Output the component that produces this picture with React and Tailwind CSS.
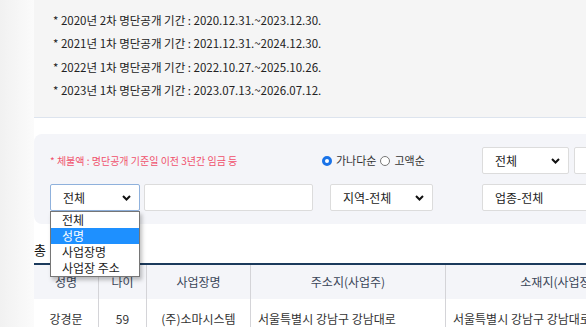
import React from "react";

const font = { fontFamily: '"Noto Sans CJK KR", "Noto Sans", sans-serif' };

const Chevron = () => (
  <svg width="9" height="6" viewBox="0 0 9 6" className="shrink-0">
    <path d="M1 1l3.5 3.5L8 1" fill="none" stroke="#111" strokeWidth="2" />
  </svg>
);

const FakeSelect = ({ label, className = "", focused = false }) => (
  <div
    className={`h-[27px] bg-white rounded-[2px] border flex items-center justify-between pl-[12px] pr-[8px] text-[12px] text-[#222] ${
      focused ? "border-[#8fb1dc]" : "border-[#dcdcdc]"
    } ${className}`}
  >
    <span>{label}</span>
    <Chevron />
  </div>
);

const Radio = ({ checked }) =>
  checked ? (
    <span className="w-[10px] h-[10px] rounded-full border-[3px] border-[#1a73e8] bg-white shrink-0" />
  ) : (
    <span className="w-[10px] h-[10px] rounded-full border border-[#777] bg-white shrink-0" />
  );

const notices = [
  "* 2020년 2차 명단공개 기간 : 2020.12.31.~2023.12.30.",
  "* 2021년 1차 명단공개 기간 : 2021.12.31.~2024.12.30.",
  "* 2022년 1차 명단공개 기간 : 2022.10.27.~2025.10.26.",
  "* 2023년 1차 명단공개 기간 : 2023.07.13.~2026.07.12.",
];

const App = () => {
  return (
    <div className="w-[586px] h-[327px] overflow-hidden bg-white flex" style={font}>
      <div className="w-[34px] shrink-0 bg-gradient-to-r from-[#f1f1f1] to-[#fbfbfb]" />

      <div className="flex-1 min-w-0">
        {/* 명단공개 기간 */}
        <div className="h-[118px] bg-[#f5f5f5] border-b border-[#dde4ee] pl-[19px] pt-[9px] text-[11.5px] text-[#222] leading-[23.3px]">
          {notices.map((n) => (
            <div key={n} className="whitespace-nowrap">
              {n}
            </div>
          ))}
        </div>

        {/* 검색 */}
        <div className="mt-[16px] h-[90px] w-[600px] bg-[#f4f5f9] rounded-l-lg pl-[16px] pt-[13px]">
          <div className="flex items-center h-[27px]">
            <div className="w-[272px] text-[10px] text-[#f0516c] whitespace-nowrap">
              * 체불액 : 명단공개 기준일 이전 3년간 임금 등
            </div>
            <div className="w-[160px] flex items-center text-[11px] text-[#333] whitespace-nowrap">
              <Radio checked />
              <span className="ml-[4px]">가나다순</span>
              <span className="ml-[4px]" />
              <Radio />
              <span className="ml-[4px]">고액순</span>
            </div>
            <FakeSelect label="전체" className="w-[87px] shrink-0" />
            <div className="ml-[5px] w-[60px] h-[27px] bg-white border border-[#dcdcdc] rounded-[2px] shrink-0" />
          </div>

          <div className="flex items-center h-[27px] mt-[10px]">
            <div className="relative w-[90px] shrink-0">
              <FakeSelect label="전체" focused />
              <div className="absolute left-0 top-full w-[90px] bg-white border border-[#767676] shadow-[2px_3px_4px_rgba(0,0,0,0.25)] z-10 text-[12px] leading-[16px]">
                <div className="pl-[11px] text-[#222]">전체</div>
                <div className="pl-[11px] bg-[#1e90ff] text-white">성명</div>
                <div className="pl-[11px] text-[#222]">사업장명</div>
                <div className="pl-[11px] text-[#222]">사업장 주소</div>
              </div>
            </div>
            <div className="ml-[4px] w-[169px] h-[27px] bg-white border border-[#dcdcdc] rounded-[2px] shrink-0" />
            <FakeSelect label="지역-전체" className="ml-[17px] w-[103px] shrink-0" />
            <div className="ml-[49px] w-[150px] h-[27px] bg-white border border-[#dcdcdc] rounded-[2px] shrink-0 flex items-center pl-[12px] text-[12px] text-[#222]">
              업종-전체
            </div>
          </div>
        </div>

        {/* 총 */}
        <div className="h-[39px] pt-[18px] text-[13px] leading-[16px] text-[#111]">총</div>

        {/* 목록 */}
        <div className="w-[700px] border-t-2 border-[#1b3a5c]">
          <div className="flex h-[34px] bg-[#f4f5f9] text-[12px] text-[#3a4658]">
            <div className="w-[64px] flex items-center justify-center">성명</div>
            <div className="w-[48px] flex items-center justify-center border-l border-[#d4d4d8]">나이</div>
            <div className="w-[104px] flex items-center justify-center border-l border-[#d4d4d8]">사업장명</div>
            <div className="w-[195px] flex items-center justify-center border-l border-[#d4d4d8]">주소지(사업주)</div>
            <div className="w-[280px] flex items-center justify-center border-l border-[#d4d4d8]">
              <span className="-ml-[56px]">소재지(사업장)</span>
            </div>
          </div>
          <div className="flex h-[40px] text-[12px] text-[#333]">
            <div className="w-[64px] flex items-center justify-center">강경문</div>
            <div className="w-[48px] flex items-center justify-center border-l border-[#d4d4d8]">59</div>
            <div className="w-[104px] flex items-center justify-center border-l border-[#d4d4d8]">(주)소마시스템</div>
            <div className="w-[195px] flex items-center pl-[7px] border-l border-[#d4d4d8] whitespace-nowrap">
              서울특별시 강남구 강남대로
            </div>
            <div className="w-[280px] flex items-center pl-[7px] border-l border-[#d4d4d8] whitespace-nowrap">
              서울특별시 강남구 강남대로
            </div>
          </div>
        </div>
      </div>
    </div>
  );
};

export default App;
